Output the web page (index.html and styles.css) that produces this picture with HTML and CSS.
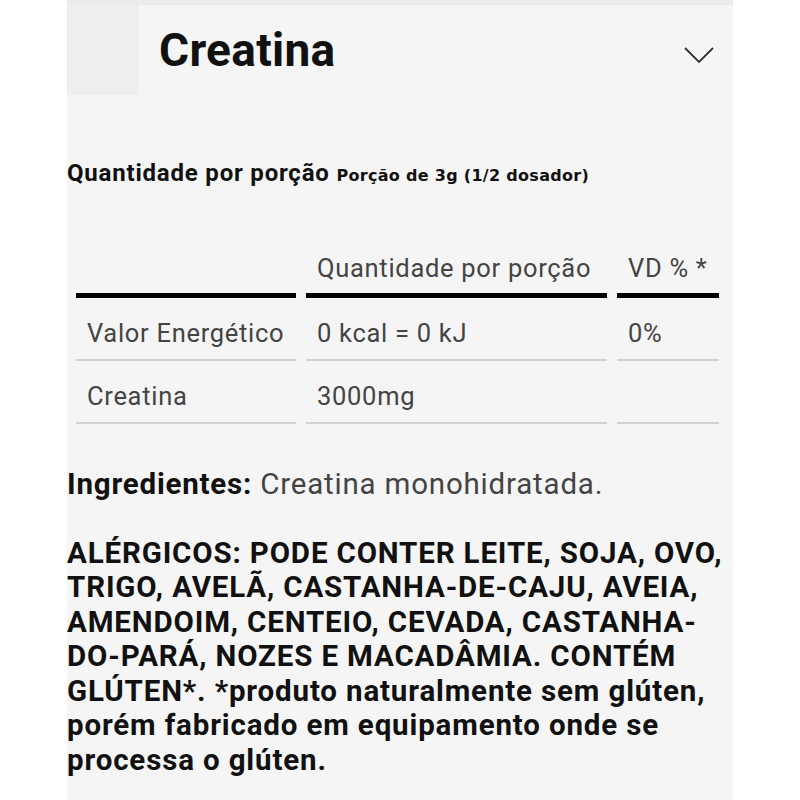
FILE: index.html
```html
<!DOCTYPE html>
<html lang="pt-BR">
<head>
    <meta charset="UTF-8">
    <meta name="viewport" content="width=device-width, initial-scale=1.0">
    <title>Creatina - Tabela Nutricional</title>
    <link rel="stylesheet" href="styles.css">
</head>
<body>
    <div class="panel">
        <div class="panel-header">
            <div class="thumb"></div>
            <h1>Creatina</h1>
            <svg class="chevron" width="32" height="18" viewBox="0 0 32 18">
                <polyline points="2,2 16,16 30,2" fill="none" stroke="#333" stroke-width="1.8"/>
            </svg>
        </div>

        <p class="serving">Quantidade por porção <span>Porção de 3g (1/2 dosador)</span></p>

        <table class="nutrition">
            <thead>
                <tr>
                    <th class="col-name"></th>
                    <th class="col-qty">Quantidade por porção</th>
                    <th class="col-vd">VD % *</th>
                </tr>
            </thead>
            <tbody>
                <tr>
                    <td>Valor Energético</td>
                    <td>0 kcal = 0 kJ</td>
                    <td>0%</td>
                </tr>
                <tr>
                    <td>Creatina</td>
                    <td>3000mg</td>
                    <td></td>
                </tr>
            </tbody>
        </table>

        <p class="ingredients"><strong>Ingredientes:</strong> Creatina monohidratada.</p>

        <p class="allergens">ALÉRGICOS: PODE CONTER LEITE, SOJA, OVO, TRIGO, AVELÃ, CASTANHA-DE-CAJU, AVEIA, AMENDOIM, CENTEIO, CEVADA, CASTANHA-DO-PARÁ, NOZES E MACADÂMIA. CONTÉM GLÚTEN*. *produto naturalmente sem glúten, porém fabricado em equipamento onde se processa o glúten.</p>
    </div>
</body>
</html>
```

FILE: styles.css
```css
:root {
    --panel-bg: #f5f5f5;
    --thumb-bg: #eeeeee;
    --strip: #ebebeb;
    --text-dark: #111111;
    --text-muted: #444444;
    --rule-light: #d2d2d2;
}

* {
    margin: 0;
    padding: 0;
    box-sizing: border-box;
    font-family: Roboto, 'Liberation Sans', sans-serif;
}

body {
    background: #ffffff;
    min-height: 100vh;
}

.panel {
    width: 666px;
    min-height: 800px;
    margin-left: 67px;
    background: var(--panel-bg);
    border-top: 5px solid var(--strip);
}

.panel-header {
    display: flex;
    align-items: center;
    height: 90px;
}

.thumb {
    width: 71px;
    height: 90px;
    background: var(--thumb-bg);
}

.panel-header h1 {
    flex: 1;
    margin-left: 21px;
    font-size: 46px;
    font-weight: 700;
    color: var(--text-dark);
    line-height: 1;
    letter-spacing: 0.3px;
}

.chevron {
    margin-right: 18px;
    margin-top: 10px;
}

.serving {
    margin-top: 63px;
    font-size: 24px;
    line-height: 30px;
    font-weight: 700;
    color: var(--text-dark);
    letter-spacing: 0.8px;
}

.serving span {
    font-family: 'DejaVu Sans', sans-serif;
    font-size: 16px;
    letter-spacing: 0.3px;
}

.nutrition {
    width: 663px;
    table-layout: fixed;
    margin-top: 53px;
    margin-left: -1px;
    border-collapse: separate;
    border-spacing: 10px 0;
    color: var(--text-muted);
    font-size: 25.5px;
    line-height: 28px;
    letter-spacing: 0.7px;
    white-space: nowrap;
}

.nutrition th {
    font-weight: 400;
    text-align: left;
    padding: 10px 0 11px 11px;
    border-bottom: 5px solid #000000;
}

.nutrition td {
    padding: 21px 0 12px 11px;
    border-bottom: 2px solid var(--rule-light);
}

.col-name {
    width: 220px;
}

.col-qty {
    width: 301px;
}

.col-vd {
    width: 102px;
}

.ingredients {
    margin-top: 43px;
    font-size: 29.5px;
    line-height: 34.5px;
    letter-spacing: 0.8px;
    color: var(--text-muted);
}

.ingredients strong {
    color: var(--text-dark);
}

.allergens {
    margin-top: 34px;
    font-size: 29.5px;
    line-height: 34.5px;
    letter-spacing: 0.85px;
    font-weight: 700;
    color: var(--text-dark);
}
```
